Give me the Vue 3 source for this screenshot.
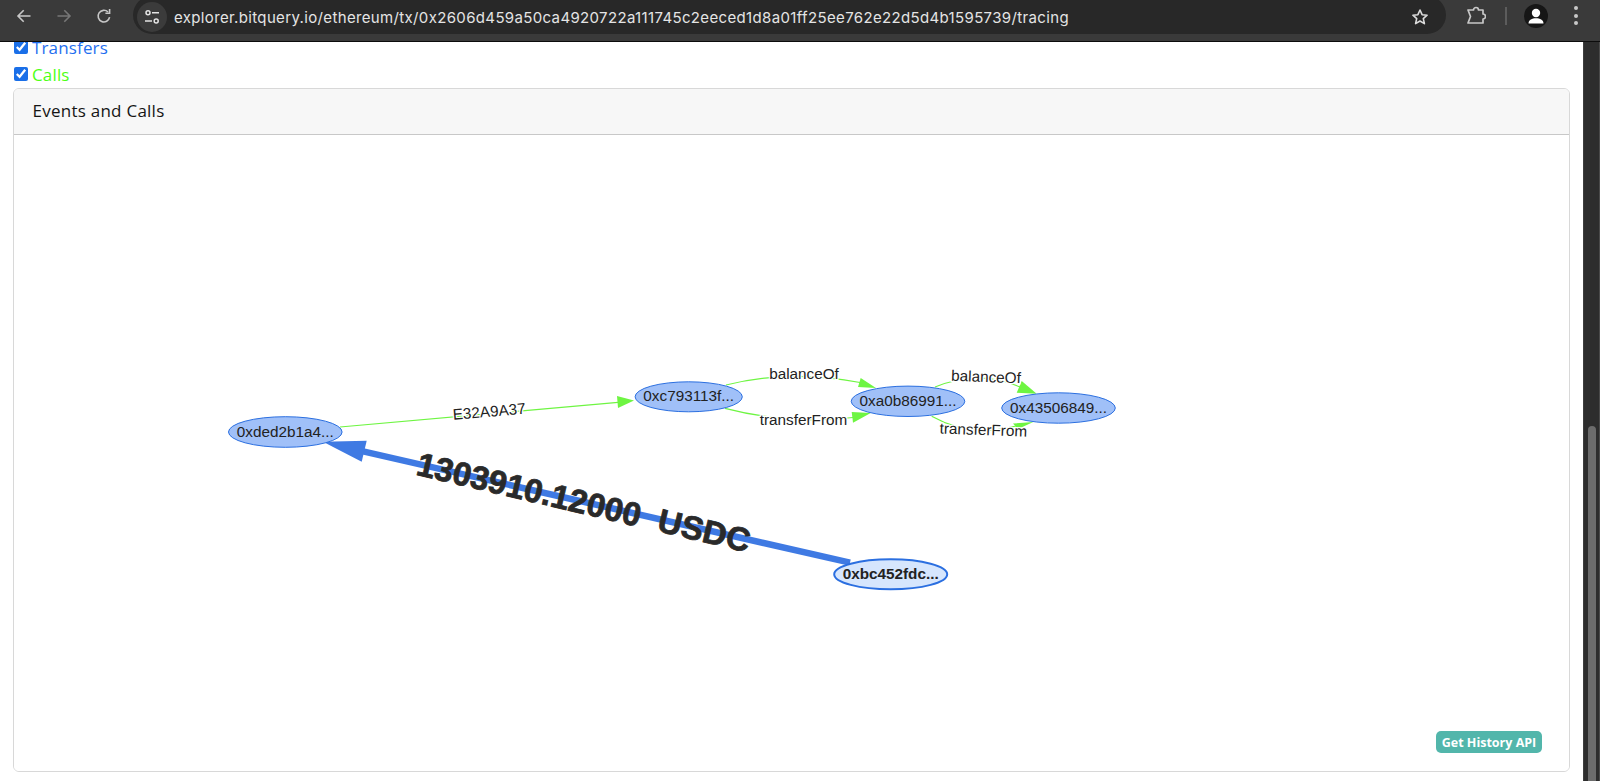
<script setup>
const nodes = [
  { id: 'a', x: 285.3, y: 432, rx: 56.8, ry: 15.3, label: '0xded2b1a4...' },
  { id: 'b', x: 688.7, y: 396.8, rx: 53.6, ry: 15, label: '0xc793113f...' },
  { id: 'c', x: 908, y: 401.3, rx: 56.8, ry: 15.2, label: '0xa0b86991...' },
  { id: 'd', x: 1058.5, y: 408, rx: 56.8, ry: 15.2, label: '0x43506849...' },
]

const calls = [
  { id: 'e1', path: 'M340 427 L618 402.3', arrow: '634,400.6 617,396 618,408', label: 'E32A9A37', x: 489.3, y: 412.7, rot: -4.8 },
  { id: 'e2', path: 'M726 385 Q790 369 860 382.5', arrow: '876,388 860.7,378 858,387', label: 'balanceOf', x: 804, y: 374.5, rot: 0 },
  { id: 'e3', path: 'M725 408.3 Q790 425 853 417.5', arrow: '870.7,413 851.7,412 853,422.7', label: 'transferFrom', x: 803.5, y: 420.5, rot: 0 },
  { id: 'e4', path: 'M935 387 Q980 369 1020 387', arrow: '1036.7,393.7 1021.7,381 1016.7,392.7', label: 'balanceOf', x: 986, y: 378, rot: 2 },
  { id: 'e5', path: 'M931.7 416.3 Q970 438 1016 426', arrow: '1033.3,422 1013,423.5 1018,429', label: 'transferFrom', x: 983.3, y: 431, rot: 2 },
]
</script>

<template>
  <div class="page">
    <header class="toolbar">
      <div class="nav">
        <button class="nav-btn" aria-label="Back">
          <svg width="16" height="16" viewBox="0 0 16 16" fill="none" stroke="#c7c7c7" stroke-width="1.6"><path d="M14.5 8H2M7.7 2.2 2 8l5.7 5.8" /></svg>
        </button>
        <button class="nav-btn" aria-label="Forward">
          <svg width="16" height="16" viewBox="0 0 16 16" fill="none" stroke="#777" stroke-width="1.6"><path d="M1.5 8H14M8.3 2.2 14 8l-5.7 5.8" /></svg>
        </button>
        <button class="nav-btn" aria-label="Reload">
          <svg width="16" height="16" viewBox="0 0 16 16" fill="none" stroke="#c7c7c7" stroke-width="1.6"><path d="M13.6 9.2A5.8 5.8 0 1 1 12 4" /><path d="M13.6 1v4.2H9.4" /></svg>
        </button>
      </div>
      <div class="omnibox">
        <span class="chip">
          <svg width="18" height="18" viewBox="0 0 18 18" fill="none" stroke="#e4e4e4" stroke-width="1.5"><circle cx="5" cy="4.8" r="2" /><path d="M9 4.8h7M2 13h7" /><circle cx="13.2" cy="13" r="2" /></svg>
        </span>
        <span class="url">explorer.bitquery.io/ethereum/tx/0x2606d459a50ca4920722a111745c2eeced1d8a01ff25ee762e22d5d4b1595739/tracing</span>
        <svg class="star" width="18" height="18" viewBox="0 0 18 18" fill="none" stroke="#dcdcdc" stroke-width="1.6" stroke-linejoin="round"><path d="M9 2l2.1 4.7 5 .5-3.8 3.4 1.1 5L9 13l-4.4 2.6 1.1-5L1.9 7.2l5-.5z" /></svg>
      </div>
      <div class="actions">
        <svg class="puzzle" width="20" height="20" viewBox="0 0 20 20" fill="none" stroke="#c8c8c8" stroke-width="1.7" stroke-linejoin="round"><path d="M2 4h5.5a2.500 2.500 0 0 1 5 0H17v4a2.500 2.500 0 0 1 0 5v4H2l2.500-6.500z" /></svg>
        <span class="divider"></span>
        <span class="avatar">
          <svg width="24" height="24" viewBox="0 0 24 24" fill="#fff"><circle cx="12" cy="9" r="4.200" /><path d="M4.500 19.500c0-3.600 3.600-5.200 7.500-5.200s7.500 1.600 7.500 5.200z" /></svg>
        </span>
        <span class="dots"><i></i><i></i><i></i></span>
      </div>
    </header>

    <div class="viewport">
      <main class="content">
        <label class="legend legend-blue"><input type="checkbox" checked />Transfers</label>
        <label class="legend legend-green"><input type="checkbox" checked />Calls</label>
        <section class="card">
          <div class="card-header">Events and Calls</div>
          <div class="card-body">
            <svg class="graph" viewBox="14 135 1555 636" width="1555" height="636">
              <path d="M850 562.700 L362 451.200" stroke="#3f7ae3" stroke-width="6.500" fill="none" />
              <polygon points="323,441.700 366.700,440.700 361.700,461.700" fill="#3f7ae3" />
              <text class="transfer-label" x="583" y="505" transform="rotate(13.2 583 505)" text-anchor="middle" dominant-baseline="middle">1303910.12000&nbsp;&nbsp;USDC</text>

              <g v-for="e in calls" :key="e.id">
                <path :d="e.path" stroke="#6ef542" stroke-width="1.200" fill="none" />
                <polygon :points="e.arrow" fill="#6ef542" />
              </g>

              <g v-for="n in nodes" :key="n.id">
                <ellipse :cx="n.x" :cy="n.y" :rx="n.rx" :ry="n.ry" fill="#a0c0f8" stroke="#2b6fe0" stroke-width="1" />
                <text class="node-label" :x="n.x" :y="n.y + 0.5" text-anchor="middle" dominant-baseline="middle">{{ n.label }}</text>
              </g>

              <ellipse cx="890.700" cy="574.300" rx="56.500" ry="15" fill="#d6e6fd" stroke="#2b6fe0" stroke-width="2" />
              <text class="node-label node-label-bold" x="890.700" y="574.800" text-anchor="middle" dominant-baseline="middle">0xbc452fdc...</text>

              <text
                v-for="e in calls"
                :key="e.id + '-label'"
                class="edge-label"
                :x="e.x"
                :y="e.y"
                :transform="`rotate(${e.rot} ${e.x} ${e.y})`"
                text-anchor="middle"
                dominant-baseline="middle"
              >{{ e.label }}</text>
            </svg>
            <a class="api-btn">Get History API</a>
          </div>
        </section>
      </main>
      <aside class="scrollbar"><div class="thumb"></div></aside>
    </div>
  </div>
</template>

<style>
html, body { margin: 0; height: 100%; overflow: hidden; background: #fff; }
</style>

<style scoped>
.page {
  width: 1600px;
  height: 781px;
  display: flex;
  flex-direction: column;
  overflow: hidden;
  font-family: "Open Sans", "Noto Sans", sans-serif;
}

/* browser chrome */
.toolbar {
  box-sizing: border-box;
  height: 42px;
  flex: none;
  display: flex;
  align-items: center;
  padding: 0 0 10px 4px;
  background: #3a3a3a;
  border-bottom: 1px solid #0c0c0c;
  overflow: hidden;
}
.nav { display: flex; }
.nav-btn {
  width: 40px;
  height: 32px;
  padding: 0;
  border: 0;
  background: none;
  display: flex;
  align-items: center;
  justify-content: center;
}
.omnibox {
  flex: 1;
  align-self: flex-start;
  margin: -4px 0 0 9px;
  height: 38px;
  box-sizing: border-box;
  padding: 4px 17px 0 4px;
  border-radius: 19px;
  background: #282828;
  display: flex;
  align-items: center;
}
.chip {
  width: 30px;
  height: 30px;
  border-radius: 50%;
  background: #3b3b3b;
  display: flex;
  align-items: center;
  justify-content: center;
  flex: none;
}
.url {
  margin-left: 7px;
  flex: 1;
  color: #e4e4e4;
  font: 15px "Inter", "Liberation Sans", sans-serif;
  letter-spacing: 0.350px;
  white-space: nowrap;
}
.star { flex: none; }
.actions { width: 154px; flex: none; display: flex; align-items: center; }
.puzzle { margin-left: 20px; }
.divider { width: 2px; height: 18px; margin-left: 19px; background: #5c5c5c; }
.avatar {
  width: 24px;
  height: 24px;
  margin-left: 17px;
  border-radius: 50%;
  background: #161616;
  display: flex;
}
.dots { margin-left: 26px; display: flex; flex-direction: column; gap: 3.500px; }
.dots i { width: 4px; height: 4px; border-radius: 50%; background: #c8c8c8; }

/* page */
.viewport { flex: 1; min-height: 0; display: flex; }
.content { flex: 1; min-width: 0; overflow: hidden; background: #fff; }
.legend {
  height: 27px;
  display: flex;
  align-items: center;
  gap: 4px;
  padding-left: 14px;
  font-size: 17px;
  letter-spacing: 0.150px;
}
.legend input {
  margin: -2px 0 0;
  width: 14px;
  height: 14px;
  accent-color: #1a6fe8;
}
.legend-blue { margin-top: -8px; color: #1f6ff0; }
.legend-green { color: #4dff14; }

.card {
  margin: 0 13px;
  height: 684px;
  box-sizing: border-box;
  border: 1px solid #d8d8d8;
  border-radius: 6px;
  display: flex;
  flex-direction: column;
  overflow: hidden;
}
.card-header {
  box-sizing: border-box;
  height: 46px;
  flex: none;
  padding: 0 18.500px 2px;
  display: flex;
  align-items: center;
  background: #f7f7f7;
  border-bottom: 1px solid #c8c8c8;
  color: #151515;
  font-size: 17px;
  letter-spacing: 0.250px;
}
.card-body { flex: 1; min-height: 0; position: relative; background: #fff; }
.graph { display: block; }

.node-label {
  font: 15.300px "Liberation Sans", Arial, sans-serif;
  fill: #222;
}
.node-label-bold { font-weight: 700; }
.edge-label {
  font: 15.300px "Liberation Sans", Arial, sans-serif;
  fill: #222;
  stroke: #fff;
  stroke-width: 2.500px;
  paint-order: stroke;
}
.transfer-label {
  font: 700 33px "Liberation Sans", Arial, sans-serif;
  fill: #2a2a2a;
  stroke: #2a2a2a;
  stroke-width: 0.800px;
}

.api-btn {
  position: absolute;
  right: 27px;
  bottom: 18px;
  width: 106px;
  height: 22px;
  border-radius: 5px;
  background: #52b6ab;
  color: #fff;
  font-size: 12.500px;
  font-weight: 700;
  display: flex;
  align-items: center;
  justify-content: center;
}

.scrollbar {
  width: 17px;
  flex: none;
  box-sizing: border-box;
  padding: 384px 3px 0 4px;
  background: #2d2d2d;
  border-left: 1px solid #3e3e3e;
  border-right: 1px solid #4a4a4a;
}
.thumb {
  height: 400px;
  border-radius: 5px 5px 0 0;
  background: #6c6c6c;
}
</style>
